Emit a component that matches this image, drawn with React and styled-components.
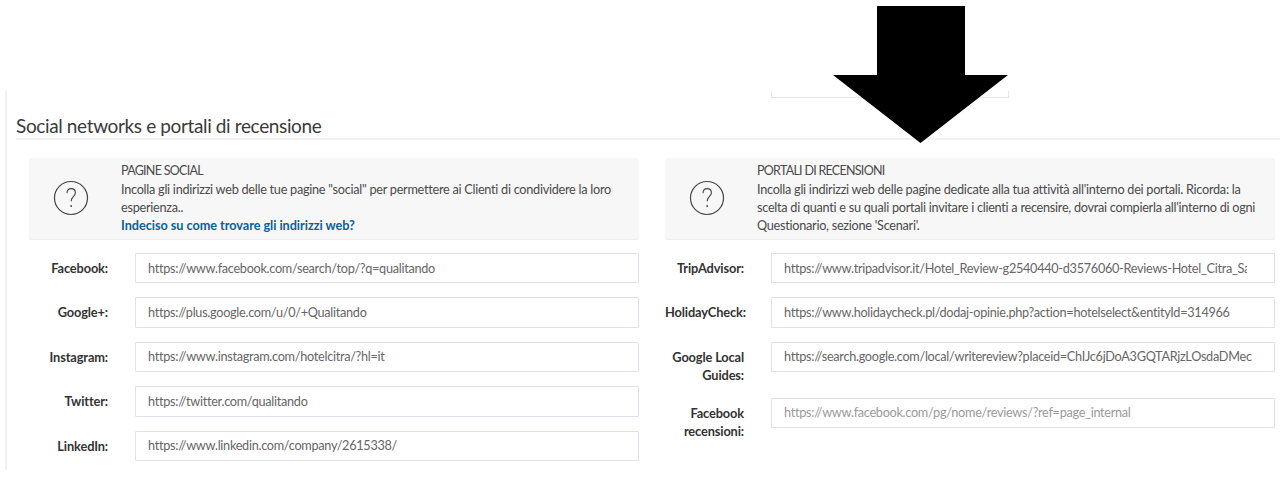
import React from 'react'
import styled, { createGlobalStyle } from 'styled-components'

const GlobalStyle = createGlobalStyle`
  html, body {
    margin: 0;
    background: #fff;
    overflow: hidden;
  }
  body {
    font-family: 'Lato', 'Noto Sans', sans-serif;
    color: #444;
  }
`

const Page = styled.div`
  position: relative;
  width: 1280px;
  height: 482px;
  padding-top: 91px;
  box-sizing: border-box;
`

const Arrow = styled.svg`
  position: absolute;
  left: 833px;
  top: 6px;
`

const Panel = styled.section`
  margin-left: 5px;
  height: 379px;
  border-left: 2px solid #eef0f4;
  padding-left: 9px;
`

const TopFragment = styled.div`
  margin-left: 755px;
  width: 236px;
  height: 6px;
  border: 1px solid #e2e4ea;
  border-top: none;
`

const Heading = styled.h2`
  margin: 16px 0 0;
  font-size: 19px;
  line-height: 24px;
  font-weight: 400;
  letter-spacing: -0.37px;
  color: #3a3a3a;
  padding-bottom: 0;
  border-bottom: 2px solid #f0f1f3;
`

const Columns = styled.div`
  display: grid;
  grid-template-columns: 610px 610px;
  column-gap: 26px;
  margin: 18px 0 0 13px;
`

const Column = styled.div`
  min-width: 0;
`

const InfoBox = styled.div`
  display: flex;
  align-items: center;
  height: 81px;
  box-sizing: border-box;
  background: #f7f7f7;
  border-radius: 2px;
  box-shadow: 0 1px 1px #eceef0;
  margin-bottom: 14px;
`

const IconSlot = styled.div`
  flex: 0 0 84px;
  margin-right: 8px;
  padding-bottom: 2px;
  display: flex;
  justify-content: center;
  color: #444;
`

const InfoText = styled.div`
  flex: 1;
  padding: 0 10px 2px 0;
  font-size: 12.7px;
  line-height: 18px;
  letter-spacing: -0.27px;
  color: #4a4a4a;
`

const InfoTitle = styled.div`
  font-size: 12.5px;
  letter-spacing: -0.72px;
`

const HelpLink = styled.a`
  display: block;
  font-weight: 700;
  letter-spacing: -0.04px;
  color: #0b6192;
`

const FieldList = styled.div`
  display: flex;
  flex-direction: column;
  gap: 14px;
`

const Field = styled.div`
  display: grid;
  grid-template-columns: 106px 1fr;
  align-items: start;
`

const Label = styled.label`
  padding: 6px 27px 0 0;
  text-align: right;
  font-size: 12.8px;
  line-height: 18px;
  font-weight: 700;
  letter-spacing: -0.13px;
  color: #333;
`

const Input = styled.input`
  width: 100%;
  height: 30.4px;
  box-sizing: border-box;
  padding: 0 ${p => p.$clip || 20}px 1px 12px;
  border: 1px solid #e0e2e8;
  border-radius: 1px;
  background: #fff;
  font-family: inherit;
  font-size: 12.7px;
  letter-spacing: -0.29px;
  color: #666;
  outline: none;
  &::placeholder {
    color: #9a9a9a;
    opacity: 1;
  }
`

const HelpIcon = () => (
  <svg width="36" height="36" viewBox="0 0 36 36" fill="none" stroke="currentColor">
    <circle cx="18" cy="18" r="16.5" strokeWidth="1.2" />
    <path d="M14 13.2c0-2.8 1.8-4.6 4.2-4.6s4.2 1.7 4.2 4.1c0 3.6-4.2 3.9-4.2 8.6" strokeWidth="1.1" />
    <circle cx="18.2" cy="26" r="0.9" fill="currentColor" stroke="none" />
  </svg>
)

const social = [
  { label: 'Facebook:', value: 'https://www.facebook.com/search/top/?q=qualitando' },
  { label: 'Google+:', value: 'https://plus.google.com/u/0/+Qualitando' },
  { label: 'Instagram:', value: 'https://www.instagram.com/hotelcitra/?hl=it' },
  { label: 'Twitter:', value: 'https://twitter.com/qualitando' },
  { label: 'LinkedIn:', value: 'https://www.linkedin.com/company/2615338/' },
]

const portals = [
  { label: 'TripAdvisor:', value: 'https://www.tripadvisor.it/Hotel_Review-g2540440-d3576060-Reviews-Hotel_Citra_Sasso_Marconi.html', clip: 27 },
  { label: 'HolidayCheck:', value: 'https://www.holidaycheck.pl/dodaj-opinie.php?action=hotelselect&entityId=314966' },
  { label: 'Google Local Guides:', value: 'https://search.google.com/local/writereview?placeid=ChIJc6jDoA3GQTARjzLOsdaDMec' },
  { label: 'Facebook recensioni:', placeholder: 'https://www.facebook.com/pg/nome/reviews/?ref=page_internal' },
]

const Fields = ({ items }) => (
  <FieldList>
    {items.map(({ label, value, placeholder, clip }) => (
      <Field key={label}>
        <Label>{label}</Label>
        <Input defaultValue={value} placeholder={placeholder} $clip={clip} />
      </Field>
    ))}
  </FieldList>
)

const App = () => (
  <Page>
    <GlobalStyle />
    <Panel>
      <TopFragment />
      <Heading>Social networks e portali di recensione</Heading>
      <Columns>
        <Column>
          <InfoBox>
            <IconSlot><HelpIcon /></IconSlot>
            <InfoText>
              <InfoTitle>PAGINE SOCIAL</InfoTitle>
              Incolla gli indirizzi web delle tue pagine "social" per permettere ai Clienti di condividere la loro esperienza..
              <HelpLink>Indeciso su come trovare gli indirizzi web?</HelpLink>
            </InfoText>
          </InfoBox>
          <Fields items={social} />
        </Column>
        <Column>
          <InfoBox>
            <IconSlot><HelpIcon /></IconSlot>
            <InfoText>
              <InfoTitle>PORTALI DI RECENSIONI</InfoTitle>
              Incolla gli indirizzi web delle pagine dedicate alla tua attività all'interno dei portali. Ricorda: la scelta di quanti e su quali portali invitare i clienti a recensire, dovrai compierla all'interno di ogni Questionario, sezione 'Scenari'.
            </InfoText>
          </InfoBox>
          <Fields items={portals} />
        </Column>
      </Columns>
    </Panel>
    <Arrow width="175" height="138" viewBox="0 0 175 138">
      <path d="M44 0h88v69h43L87.5 137 0 69h44z" fill="#000" />
    </Arrow>
  </Page>
)

export default App
